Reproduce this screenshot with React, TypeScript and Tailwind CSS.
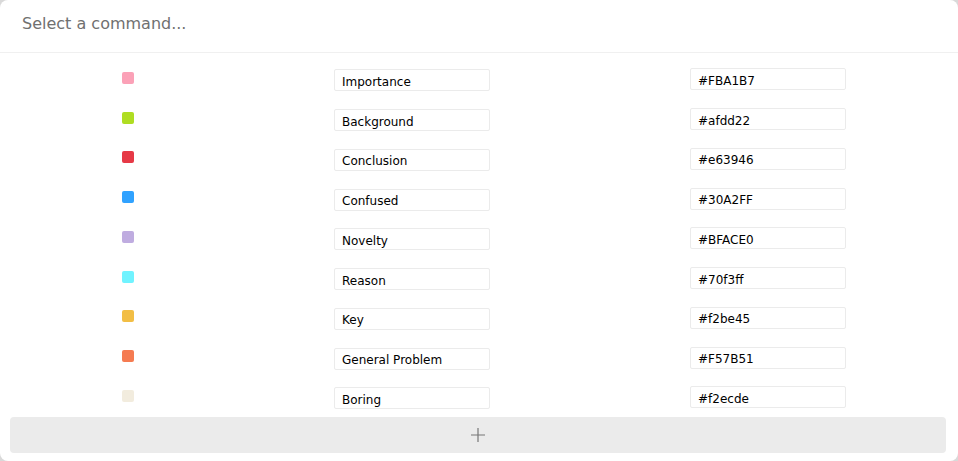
import React from "react";

const labels = [
  { name: "Importance", color: "#FBA1B7" },
  { name: "Background", color: "#afdd22" },
  { name: "Conclusion", color: "#e63946" },
  { name: "Confused", color: "#30A2FF" },
  { name: "Novelty", color: "#BFACE0" },
  { name: "Reason", color: "#70f3ff" },
  { name: "Key", color: "#f2be45" },
  { name: "General Problem", color: "#F57B51" },
  { name: "Boring", color: "#f2ecde" },
];

const App = () => {
  return (
    <div className="w-[958px] h-[461px] bg-[#d9d9d9] font-['DejaVu_Sans',sans-serif]">
      <div className="flex flex-col h-full bg-white rounded-lg overflow-hidden">
        <div className="h-[53px] flex items-center px-[22px] pb-[5px] border-b border-[#f0f0f0]">
          <span className="text-[16px] text-[#707070]">Select a command...</span>
        </div>
        <div className="h-[364px] overflow-hidden pt-[7px]">
          {labels.map((item) => (
            <div key={item.name} className="h-[39.75px] flex items-center pl-[122px] gap-[200px]">
              <div
                className="w-[12px] h-[12px] rounded-[2px] -mt-[4px]"
                style={{ backgroundColor: item.color }}
              />
              <input
                readOnly
                value={item.name}
                className="w-[156px] h-[22px] px-[7px] pt-[3px] text-[12px] text-black border border-[#ebebeb] rounded-[2px] outline-none mt-[1px]"
              />
              <input
                readOnly
                value={item.color}
                className="w-[156px] h-[22px] px-[7px] pt-[3px] text-[12px] text-black border border-[#ebebeb] rounded-[2px] outline-none -mt-[1px]"
              />
            </div>
          ))}
        </div>
        <div className="pl-[10px] pr-[12px]">
          <button className="w-full h-[36px] flex items-center justify-center bg-[#ebebeb] rounded-[4px]">
            <svg width="16" height="16" viewBox="0 0 16 16" fill="none" stroke="#777" strokeWidth="1.2">
              <path d="M8 1v14M1 8h14" />
            </svg>
          </button>
        </div>
      </div>
    </div>
  );
};

export default App;
